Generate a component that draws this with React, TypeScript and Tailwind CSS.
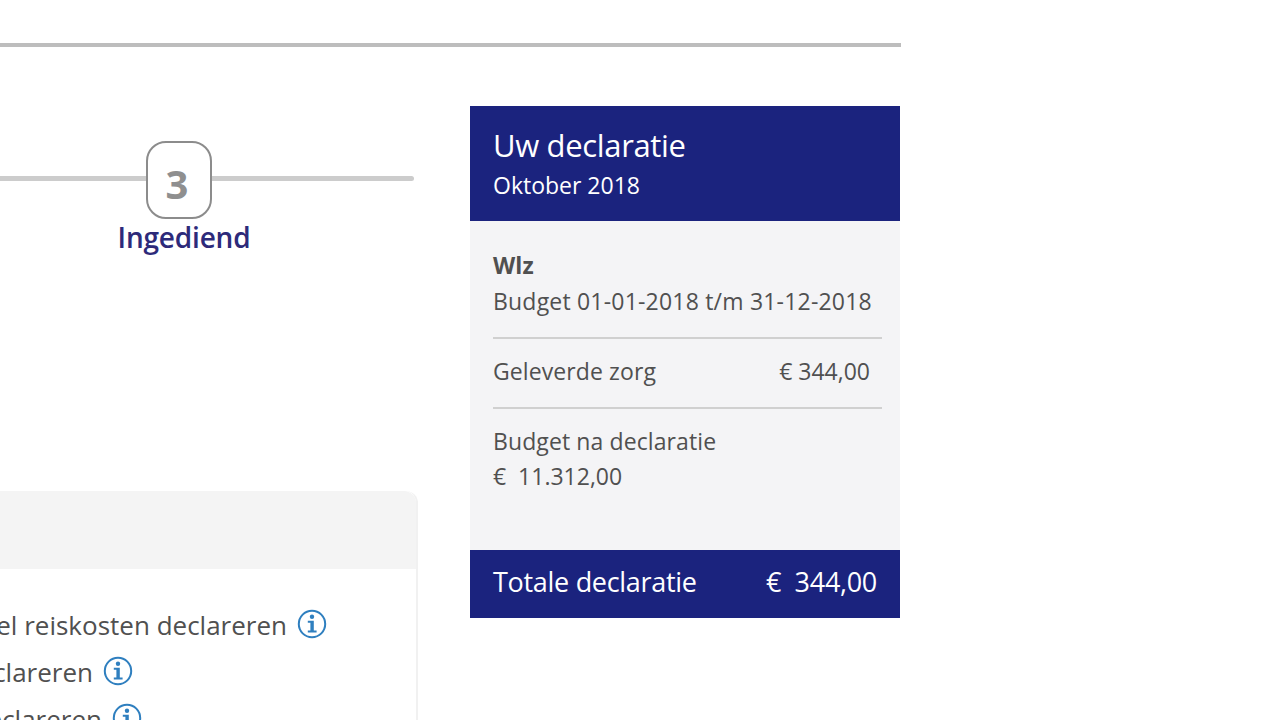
const InfoIcon = () => (
  <svg width="30" height="30" viewBox="0 0 30 30" className="shrink-0" fill="none">
    <circle cx="15" cy="15" r="13.2" stroke="#2f7fbf" strokeWidth="2" />
    <circle cx="15" cy="7.8" r="2.2" fill="#2f7fbf" />
    <path d="M10.8 11.8h6v9.8h2.8v2h-8.8v-2h2.6v-7.8h-2.6z" fill="#2f7fbf" />
  </svg>
);

const Divider = () => <div className="h-0.5 w-[389px] bg-[#d0d0d0]" />;

const reasons = [
  { label: "Enkel reiskosten declareren", width: "w-[327px]" },
  { label: "declareren", width: "w-[133px]" },
  { label: "declareren", width: "w-[142px]" },
];

export default function App() {
  return (
    <div
      className="h-[720px] w-[1280px] overflow-hidden bg-white text-[#505050]"
      style={{ fontFamily: '"Open Sans", "Noto Sans", sans-serif' }}
    >
      <div className="pt-[43px]">
        <div className="h-1 w-[901px] bg-[#bdbdbd]" />
      </div>

      <div className="flex pt-[59px]">
        {/* left column */}
        <div className="w-[470px] shrink-0">
          <div className="flex items-center pt-[35px]">
            <div className="mb-1 h-[5px] w-[146px] bg-[#cccccc]" />
            <div className="flex h-[78px] w-[66px] items-center justify-center rounded-[20px] border-2 border-[#8c8c8c] pt-2 pr-1 text-[40px] font-bold text-[#8f8f8f]">
              3
            </div>
            <div className="mb-1 h-[5px] w-[202px] rounded-r-full bg-[#cccccc]" />
          </div>
          <div className="flex w-[368px] justify-center">
            <p className="text-[28px] leading-[37px] font-semibold tracking-[-0.2px] text-[#2d2a7a]">
              Ingediend
            </p>
          </div>

          <div className="mt-[235px] w-[418px] rounded-tr-xl border-r-2 border-[#f1f1f1]">
            <div className="h-[78px] rounded-tr-xl bg-[#f4f4f4]" />
            <div className="flex flex-col gap-3 pt-[37px]">
              {reasons.map((item, i) => (
                <div key={i} className={`flex h-[35px] items-center justify-end gap-[10px] whitespace-nowrap ${item.width}`}>
                  <span className="mt-[3px] text-[26px]">{item.label}</span>
                  <InfoIcon />
                </div>
              ))}
            </div>
          </div>
        </div>

        {/* declaration card */}
        <div className="h-[512px] w-[430px] shrink-0">
          <div className="h-[115px] bg-[#1b237e] pt-[19px] pl-[23px] text-white">
            <p className="text-[31px] leading-[40px] tracking-[-0.35px]">Uw declaratie</p>
            <p className="mt-[5px] text-[23px] leading-[30px]">Oktober 2018</p>
          </div>

          <div className="h-[329px] bg-[#f4f4f6] pl-[23px] text-[23px] tracking-[0.1px]">
            <div className="pt-[26px]">
              <p className="leading-[36px] font-bold">Wlz</p>
              <p className="leading-[36px] tracking-[0.2px]">Budget 01-01-2018 t/m 31-12-2018</p>
            </div>
            <div className="mt-[18px]">
              <Divider />
            </div>
            <div className="flex h-[68px] w-[377px] items-center justify-between pb-1 tracking-normal">
              <span className="tracking-[0.1px]">Geleverde zorg</span>
              <span>€ 344,00</span>
            </div>
            <Divider />
            <div className="pt-[14px]">
              <p className="leading-[36px]">Budget na declaratie</p>
              <p className="leading-[35px] tracking-normal">€&nbsp; 11.312,00</p>
            </div>
          </div>

          <div className="flex h-[68px] items-center justify-between bg-[#1b237e] pr-[23px] pb-1 pl-[23px] text-[27px] tracking-[-0.3px] text-white">
            <span>Totale declaratie</span>
            <span>€&nbsp; 344,00</span>
          </div>
        </div>
      </div>
    </div>
  );
}
